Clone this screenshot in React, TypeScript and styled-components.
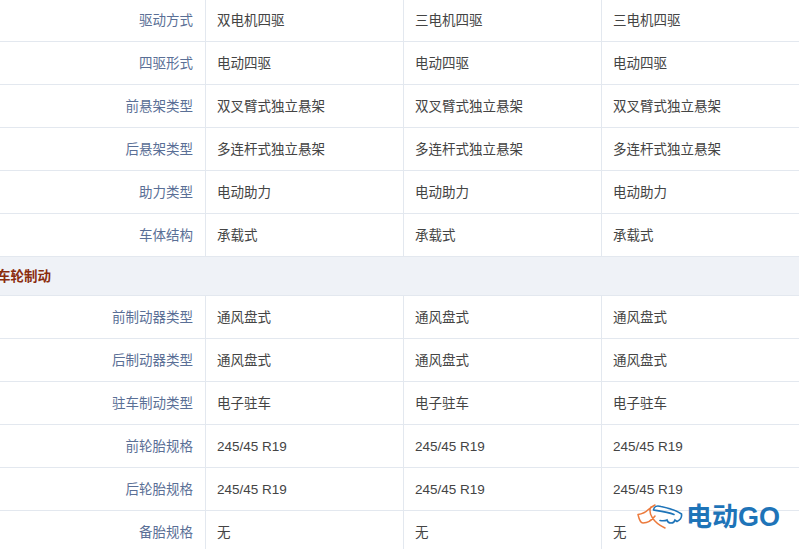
import React from "react";
import styled, { createGlobalStyle } from "styled-components";

const GlobalStyle = createGlobalStyle`
  html, body {
    margin: 0;
    padding: 0;
    background: #fff;
  }
`;

const Page = styled.div`
  position: relative;
  width: 799px;
  height: 549px;
  overflow: hidden;
  font-family: "Liberation Sans", "Noto Sans CJK SC", sans-serif;
  font-size: 13.5px;
  line-height: 20px;
  color: #444;
`;

const Table = styled.div`
  margin-top: -1px;
  width: 799px;
`;

const Row = styled.div`
  display: grid;
  grid-template-columns: 206px 198px 198px 197px;
  height: 43px;
  box-sizing: border-box;
  border-bottom: 1px solid #e3e8ef;
`;

const Label = styled.div`
  display: flex;
  align-items: center;
  justify-content: flex-end;
  padding: 1px 12px 0 0;
  border-right: 1px solid #e3e8ef;
  color: #5a6f96;
`;

const Value = styled.div<{ $last?: boolean }>`
  display: flex;
  align-items: center;
  padding: 1px 0 0 11px;
  border-right: ${p => (p.$last ? "none" : "1px solid #e3e8ef")};
`;

const Section = styled.div`
  display: flex;
  align-items: center;
  height: 39px;
  box-sizing: border-box;
  padding-top: 1px;
  background: #eff2f7;
  border-bottom: 1px solid #e3e8ef;
  color: #8a2c0d;
  font-weight: 700;
`;

const SectionTitle = styled.span`
  margin-left: -3px;
`;

const Logo = styled.div`
  position: absolute;
  left: 636px;
  top: 501px;
  display: flex;
  align-items: center;
`;

const LogoText = styled.span`
  font-family: "Noto Sans CJK SC", "Liberation Sans", sans-serif;
  font-size: 26px;
  font-weight: 700;
  line-height: 28px;
  color: #1e74b8;
  white-space: nowrap;
`;

const LogoLatin = styled.span`
  font-family: "Liberation Sans", sans-serif;
  font-size: 27px;
  font-weight: 700;
`;

type Spec = { label: string; values: string[] };

const same = (label: string, value: string): Spec => ({
  label,
  values: [value, value, value]
});

const driveRows: Spec[] = [
  { label: "驱动方式", values: ["双电机四驱", "三电机四驱", "三电机四驱"] },
  same("四驱形式", "电动四驱"),
  same("前悬架类型", "双叉臂式独立悬架"),
  same("后悬架类型", "多连杆式独立悬架"),
  same("助力类型", "电动助力"),
  same("车体结构", "承载式")
];

const brakeRows: Spec[] = [
  same("前制动器类型", "通风盘式"),
  same("后制动器类型", "通风盘式"),
  same("驻车制动类型", "电子驻车"),
  same("前轮胎规格", "245/45 R19"),
  same("后轮胎规格", "245/45 R19"),
  same("备胎规格", "无")
];

const renderRows = (rows: Spec[]) =>
  rows.map(row => (
    <Row key={row.label}>
      <Label>{row.label}</Label>
      {row.values.map((v, i) => (
        <Value key={i} $last={i === 2}>
          {v}
        </Value>
      ))}
    </Row>
  ));

const CarMark = () => (
  <svg width="50" height="28" viewBox="0 0 50 28" fill="none">
    <path
      d="M2 12.5 C6 12 10 10 13 7 C15 5.5 17 4 19 3 M2 12.5 C3 17 4 21 7 21 C11 21 16 18 19 14 M15 5 C12 10 16 20 29 26"
      stroke="#ec7a3c"
      strokeWidth="1.5"
      strokeLinecap="round"
    />
    <path
      d="M17.5 8 C18 4 21 3.5 25 4.5 C32 6 40 8 45.5 12 C46 15 44 18 41 19.5 M24 18.5 C27 19 29 19 31 18 C32 22 38 22 39 18 L41 19.5 M17.5 8 C24 9 32 10 38 12.5"
      stroke="#1e74b8"
      strokeWidth="1.6"
      strokeLinecap="round"
    />
  </svg>
);

export default function App() {
  return (
    <Page>
      <GlobalStyle />
      <Table>
        {renderRows(driveRows)}
        <Section>
          <SectionTitle>车轮制动</SectionTitle>
        </Section>
        {renderRows(brakeRows)}
      </Table>
      <Logo>
        <CarMark />
        <LogoText>
          电动<LogoLatin>GO</LogoLatin>
        </LogoText>
      </Logo>
    </Page>
  );
}
